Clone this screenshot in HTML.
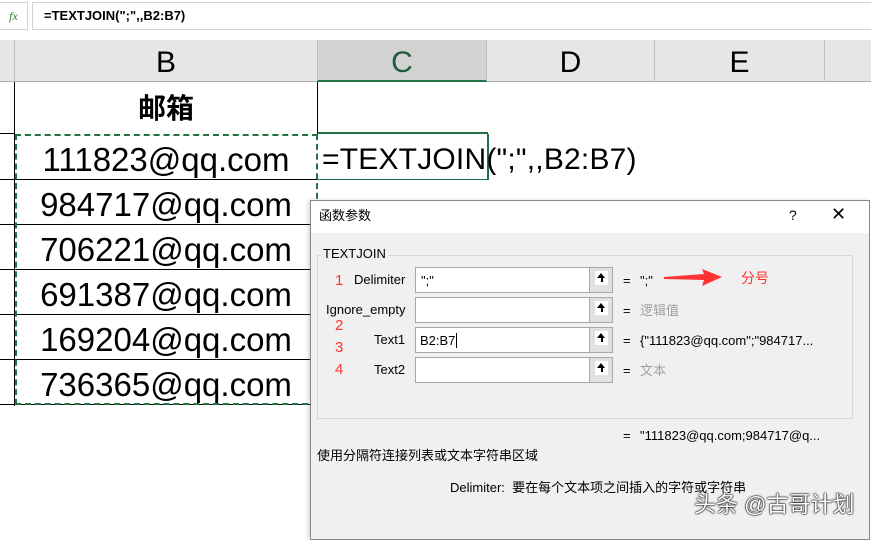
<!DOCTYPE html>
<html><head><meta charset="utf-8"><style>
*{margin:0;padding:0;box-sizing:border-box}
body{width:871px;height:532px;overflow:hidden;background:#fff;position:relative;font-family:"Liberation Sans","Noto Sans CJK SC",sans-serif}
.a{position:absolute}
.hl{position:absolute;height:1px;background:#000}
.em{position:absolute;left:15px;width:302px;text-align:center;font-size:33px;line-height:45px;color:#000}
.dl{font-size:13px;color:#000;line-height:16px;white-space:nowrap}
.inp{position:absolute;left:415px;width:198px;height:26px;border:1px solid #a8a8a8;background:#fff}
.btn{position:absolute;right:0;top:0;width:23px;height:24px;background:#e1e1e1;border-left:1px solid #a8a8a8}
.btn i{position:absolute;left:5px;top:3px;width:13px;height:14px;background:#fff}
.btn i:before{content:"";position:absolute;left:2px;top:2px;border-left:4.5px solid transparent;border-right:4.5px solid transparent;border-bottom:5px solid #000}
.btn i:after{content:"";position:absolute;left:5.5px;top:6px;width:2px;height:5px;background:#000}
.red{color:#f33;font-size:15px}
.gr{color:#a0a0a0}
</style></head><body>
<div class="a" style="left:0;top:0;width:871px;height:40px;background:#fff"></div>
<div class="a" style="left:0;top:2px;width:28px;height:28px;border:1px solid #d4d4d4;border-left:none;font-family:'Liberation Serif',serif;font-style:italic;color:#2e7d32;font-size:12px;line-height:26px;text-align:center">fx</div>
<div class="a" style="left:32px;top:2px;width:839px;height:28px;border:1px solid #d4d4d4;border-right:none;font-size:13px;font-weight:bold;line-height:26px;padding-left:11px">=TEXTJOIN(";",,B2:B7)</div>
<div class="a" style="left:0;top:40px;width:871px;height:42px;background:#e6e6e6;border-bottom:1px solid #ababab"></div>
<div class="a" style="left:14px;top:40px;width:1px;height:42px;background:#bdbdbd"></div>
<div class="a" style="left:15px;top:40px;width:302px;height:42px;font-size:30px;line-height:46px;text-align:center">B</div>
<div class="a" style="left:317px;top:40px;width:170px;height:42px;background:#d2d2d2;border-left:1px solid #bdbdbd;border-right:1px solid #bdbdbd;border-bottom:2px solid #217346;font-size:30px;line-height:46px;text-align:center;color:#1d5c3a">C</div>
<div class="a" style="left:487px;top:40px;width:168px;height:42px;font-size:30px;line-height:46px;text-align:center;border-right:1px solid #bdbdbd">D</div>
<div class="a" style="left:655px;top:40px;width:170px;height:42px;font-size:30px;line-height:46px;text-align:center;border-right:1px solid #bdbdbd">E</div>
<div class="a" style="left:14px;top:82px;width:1px;height:324px;background:#000"></div>
<div class="a" style="left:317px;top:82px;width:1px;height:52px;background:#000"></div>
<div class="a" style="left:15px;top:82px;width:302px;height:52px;font-size:28px;font-weight:bold;line-height:54px;text-align:center">邮箱</div>
<div class="a" style="left:318px;top:132px;width:170px;height:2px;background:#217346"></div>
<div class="hl" style="left:0;top:133px;width:15px"></div>
<div class="hl" style="left:0;top:179px;width:318px"></div>
<div class="hl" style="left:317px;top:179px;width:171px;background:#217346"></div>
<div class="hl" style="left:0;top:224px;width:318px"></div>
<div class="hl" style="left:0;top:269px;width:318px"></div>
<div class="hl" style="left:0;top:314px;width:318px"></div>
<div class="hl" style="left:0;top:359px;width:318px"></div>
<div class="hl" style="left:0;top:404px;width:318px"></div>
<div class="a" style="left:487px;top:134px;width:2px;height:46px;background:#217346"></div>
<div class="a" style="left:15px;top:134px;width:303px;height:271px;border:2px dashed #217346"></div>
<div class="em" style="top:137px">111823@qq.com</div>
<div class="em" style="top:182px">984717@qq.com</div>
<div class="em" style="top:227px">706221@qq.com</div>
<div class="em" style="top:272px">691387@qq.com</div>
<div class="em" style="top:317px">169204@qq.com</div>
<div class="em" style="top:362px">736365@qq.com</div>
<div class="a" style="left:322px;top:137px;font-size:30px;line-height:45px;white-space:nowrap;letter-spacing:0.2px">=TEXTJOIN(";",,B2:B7)</div>
<div class="a" style="left:310px;top:200px;width:560px;height:340px;background:#f0f0f0;border:1px solid #8a8a8a;box-shadow:-2px 0 4px rgba(0,0,0,.15)">
 <div class="a" style="left:0;top:0;width:558px;height:32px;background:#fff"></div>
 <div class="a dl" style="left:8px;top:7px">函数参数</div>
 <div class="a" style="left:478px;top:6px;font-size:14px">?</div>
 <div class="a" style="left:520px;top:3px;font-size:18px;font-weight:300">✕</div>
 <div class="a" style="left:6px;top:54px;width:536px;height:164px;border:1px solid #d8d8d8"></div>
 <div class="a dl" style="left:10px;top:45px;background:#f0f0f0;padding:0 2px">TEXTJOIN</div>
</div>
<div class="a dl" style="left:354px;top:272px">Delimiter</div>
<div class="a dl" style="left:326px;top:302px">Ignore_empty</div>
<div class="a dl" style="left:374px;top:332px">Text1</div>
<div class="a dl" style="left:374px;top:362px">Text2</div>
<div class="a red" style="left:335px;top:272px">1</div>
<div class="a red" style="left:335px;top:317px">2</div>
<div class="a red" style="left:335px;top:339px">3</div>
<div class="a red" style="left:335px;top:361px">4</div>
<div class="inp" style="top:267px"><span class="dl" style="position:absolute;left:5px;top:5px">";"</span><div class="btn"><i></i></div></div>
<div class="inp" style="top:297px"><div class="btn"><i></i></div></div>
<div class="inp" style="top:327px"><span class="dl" style="position:absolute;left:4px;top:5px">B2:B7<span style="border-left:1px solid #000;margin-left:1px"></span></span><div class="btn"><i></i></div></div>
<div class="inp" style="top:357px"><div class="btn"><i></i></div></div>
<div class="a dl" style="left:623px;top:273px">=</div><div class="a dl" style="left:640px;top:273px">";"</div>
<div class="a dl" style="left:623px;top:303px">=</div><div class="a dl gr" style="left:640px;top:303px">逻辑值</div>
<div class="a dl" style="left:623px;top:333px">=</div><div class="a dl" style="left:640px;top:333px">{"111823@qq.com";"984717...</div>
<div class="a dl" style="left:623px;top:363px">=</div><div class="a dl gr" style="left:640px;top:363px">文本</div>
<svg class="a" style="left:664px;top:269px" width="60" height="18"><polygon points="0,8 40,5 38,0 58,8 38,17 40,11 0,10" fill="#f33"/></svg>
<div class="a" style="left:741px;top:268px;color:#f33;font-size:14px">分号</div>
<div class="a dl" style="left:623px;top:428px">=</div><div class="a dl" style="left:640px;top:428px">"111823@qq.com;984717@q...</div>
<div class="a dl" style="left:317px;top:448px">使用分隔符连接列表或文本字符串区域</div>
<div class="a dl" style="left:450px;top:480px">Delimiter:&nbsp;&nbsp;要在每个文本项之间插入的字符或字符串</div>
<div class="a" style="left:694px;top:490px;font-size:22px;line-height:30px;color:#fff;text-shadow:0 0 2px #000,0 0 1px #000,0 0 1px #000;white-space:nowrap">头条 @古哥计划</div>
</body></html>
